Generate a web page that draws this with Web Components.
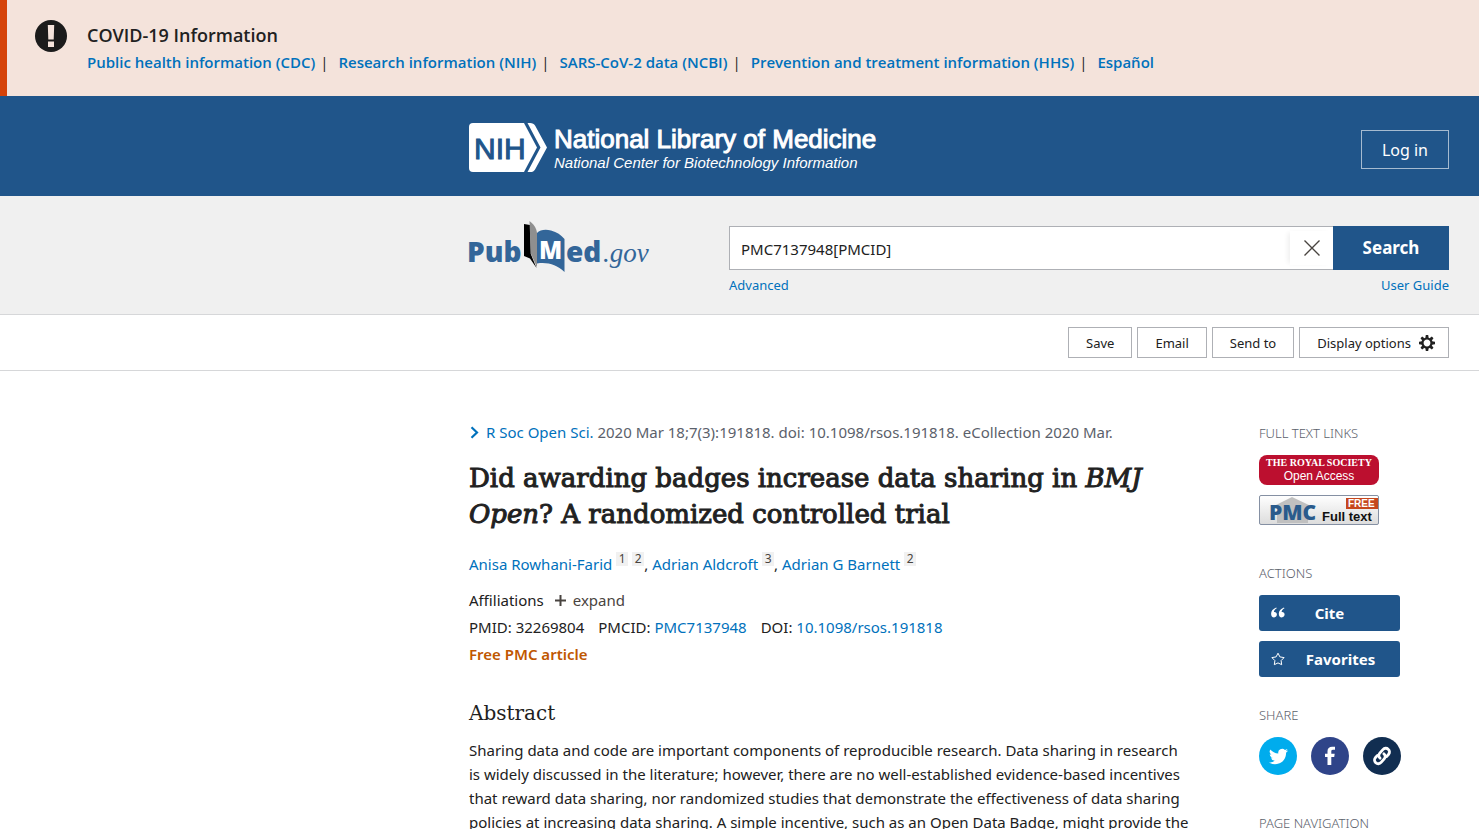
<!DOCTYPE html>
<html lang="en">
<head>
<meta charset="utf-8">
<meta name="viewport" content="width=device-width, initial-scale=1">
<title>Did awarding badges increase data sharing in BMJ Open? - PubMed</title>
<style>
  :root {
    --link: #0071bc;
    --ink: #212121;
    --muted: #5b616b;
    --brand: #20558a;
    --line: #d6d7d9;
    --control: #aeb0b5;
    --serif: "DejaVu Serif", serif;
    --page-pad: 30px;
    --content: 980px;
  }
  html { scrollbar-width: none; }
  body {
    margin: 0;
    background: #fff;
    color: var(--ink);
    font: 15px/24px "Noto Sans", "Open Sans", sans-serif;
  }
  .columns {
    display: grid;
    grid-template-columns: minmax(0, 720px) minmax(141px, 190px);
    column-gap: 70px;
    padding-top: 49px;
  }
</style>
</head>
<body>
<covid-banner>
  <banner-link href="#cdc">Public health information (CDC)</banner-link>
  <banner-link href="#nih">Research information (NIH)</banner-link>
  <banner-link href="#ncbi">SARS-CoV-2 data (NCBI)</banner-link>
  <banner-link href="#hhs">Prevention and treatment information (HHS)</banner-link>
  <banner-link href="#es" last>Español</banner-link>
</covid-banner>
<page-band tone="brand"><nlm-header></nlm-header></page-band>
<page-band tone="grey"><search-area></search-area></page-band>
<page-band tone="bar">
  <tool-bar>
    <tool-button>Save</tool-button>
    <tool-button>Email</tool-button>
    <tool-button>Send to</tool-button>
    <tool-button icon="gear">Display options</tool-button>
  </tool-bar>
</page-band>
<page-band>
  <div class="columns">
    <article-view></article-view>
    <side-panel></side-panel>
  </div>
</page-band>

<script>
const base = `
  * { box-sizing: border-box; }
  :host { display: block; }
  a { color: var(--link); text-decoration: none; }
  a:hover { text-decoration: underline; }
  button, input { font: inherit; color: inherit; margin: 0; border-radius: 0; }
  button { cursor: pointer; }
  svg { display: block; flex: none; }
  ul, p, h1, h2, h3 { margin: 0; padding: 0; }
`;

function define(name, css, html) {
  customElements.define(name, class extends HTMLElement {
    constructor() {
      super();
      const markup = typeof html === 'function' ? html(this) : html;
      this.attachShadow({ mode: 'open' }).innerHTML = `<style>${base}${css}</style>${markup}`;
    }
  });
}

define('banner-link', `
  :host { display: flex; line-height: 24px; }
  a { font-weight: 600; }
  span { margin: 0 10px 0 5px; }
`, el => `<a href="${el.getAttribute('href')}"><slot></slot></a>${el.hasAttribute('last') ? '' : '<span>|</span>'}`);

define('covid-banner', `
  :host { display: flex; gap: 20px; padding: 20px 28px 22px; background: #f4e3db; border-left: 7px solid #d54309; font-family: "Open Sans", sans-serif; }
  h2 { font-size: 18px; font-weight: 600; line-height: 30px; }
  nav { display: flex; flex-wrap: wrap; }
`, `
  <svg width="32" height="32" viewBox="0 0 32 32" aria-hidden="true">
    <circle cx="16" cy="16" r="16" fill="#1b1b1b"/>
    <path d="M12.8 5h6.400l-.5 14.600h-5.400zM13 21.400h6v5.600h-6z" fill="#f4e3db"/>
  </svg>
  <div>
    <h2>COVID-19 Information</h2>
    <nav aria-label="COVID-19 links"><slot></slot></nav>
  </div>
`);

define('page-band', `
  :host { display: grid; grid-template-columns: 1fr minmax(0, var(--content)); padding: 0 var(--page-pad); }
  :host([tone="brand"]) { background: var(--brand); color: #fff; }
  :host([tone="grey"]) { background: #f0f0f0; border-bottom: 1px solid var(--line); }
  :host([tone="bar"]) { border-bottom: 1px solid var(--line); }
  div { grid-column: 2; }
`, `<div><slot></slot></div>`);

define('nlm-header', `
  :host { display: flex; align-items: center; justify-content: space-between; min-height: 97px; padding-top: 3px; font-family: "Liberation Sans", Arial, sans-serif; }
  .logo { display: flex; gap: 7px; color: #fff; text-decoration: none; }
  .logo span { display: block; white-space: nowrap; }
  .big { font-size: 26px; line-height: 30px; padding-top: 1px; -webkit-text-stroke: 1px currentColor; }
  .small { font-size: 15px; font-style: italic; line-height: 17px; }
  button { height: 39px; margin-top: 4px; padding: 0 20px; border: 1px solid #a6bbd0; background: none; color: #fff; font: 16px/24px "Noto Sans", sans-serif; }
`, `
  <a class="logo" href="#ncbi-home">
    <svg width="78" height="49" viewBox="0 0 78 49" aria-hidden="true">
      <path d="M4 0h51l13 24.500L55 49H4a4 4 0 0 1-4-4V4a4 4 0 0 1 4-4z" fill="#fff"/>
      <path d="M58.500 0H61c2.600 0 4 .8 5.200 2.800L78 24.500 66.200 46.200C65 48.200 63.600 49 61 49h-2.500l13-24.500z" fill="#fff"/>
      <text x="5" y="36" font-family="Liberation Sans, Arial, sans-serif" font-size="30" fill="#20558a" stroke="#20558a" stroke-width="1">NIH</text>
    </svg>
    <span><span class="big">National Library of Medicine</span><span class="small">National Center for Biotechnology Information</span></span>
  </a>
  <button type="button">Log in</button>
`);

define('pubmed-logo', ``, `
  <a href="#pubmed" aria-label="PubMed home">
  <svg width="184" height="54" viewBox="-2 0 184 54">
    <path d="M55 4l6 1 .8 29 5.700 14-6.500-9.500L55 36z" fill="#000"/>
    <path d="M60.500 1c4 3 7 7 7.500 12v34.500l-6.200-14z" fill="#8f8f8f"/>
    <path d="M68 13c3-3 8-4 14-2.500 6 1.500 10 4.500 13.500 8.500v33c-8-7-16-10-27.500-8.500z" fill="#336699"/>
    <g font-family="Open Sans, sans-serif" font-weight="800" fill="#336699">
      <text x="-2" y="42" font-size="28">Pub</text>
      <text x="70" y="39" font-size="24" fill="#fff">M</text>
      <text x="97" y="42" font-size="28">ed</text>
    </g>
    <text x="134" y="42" font-family="Liberation Serif, serif" font-style="italic" font-size="27" fill="#336699">.gov</text>
  </svg></a>
`);

define('search-area', `
  :host { display: grid; grid-template-columns: 260px minmax(0, 1fr); padding: 30px 0 19px; }
  pubmed-logo { margin: -6px 0 0 -2px; }
  form { display: flex; height: 44px; }
  .field { flex: 1; display: flex; min-width: 0; background: #fff; border: 1px solid var(--control); border-right: 0; }
  input { flex: 1; min-width: 0; border: 0; outline: 0; background: none; padding: 2px 11px 0; }
  .clear { display: grid; place-items: center; width: 43px; margin: 4px 0; padding: 0; border: 0; background: #fff; box-shadow: -4px 0 5px -2px #eee; }
  .go { width: 116px; border: 0; background: var(--brand); color: #fff; font-size: 17px; font-weight: 700; }
  .links { display: flex; justify-content: space-between; font-size: 13px; line-height: 20px; padding-top: 5px; }
`, `
  <pubmed-logo></pubmed-logo>
  <div>
    <form role="search" onsubmit="return false">
      <div class="field">
        <input type="text" aria-label="Search term" value="PMC7137948[PMCID]">
        <button class="clear" type="button" aria-label="Clear search">
          <svg width="16" height="16" viewBox="0 0 16 16"><path d="M.5.5l15 15M15.500.5L.5 15.500" stroke="#494440" stroke-width="1.400" fill="none"/></svg>
        </button>
      </div>
      <button class="go" type="submit">Search</button>
    </form>
    <div class="links"><a href="#advanced">Advanced</a><a href="#guide">User Guide</a></div>
  </div>
`);

define('tool-bar', `
  :host { display: flex; justify-content: flex-end; gap: 5px; padding: 12px 0; }
`, `<slot></slot>`);

define('tool-button', `
  button { display: flex; align-items: center; gap: 8px; height: 31px; padding: 0 17px; border: 1px solid var(--control); background: #fff; font-size: 13px; line-height: 20px; }
  :host([icon]) button { padding-right: 13px; }
`, el => `<button type="button"><slot></slot>${el.hasAttribute('icon') ? `
  <svg width="16" height="16" viewBox="-8 -8 16 16" aria-hidden="true" fill="#212121">
    <circle r="4.500" fill="none" stroke="#212121" stroke-width="2.200"/>
    <path d="M-1.200-8h2.400l.5 3.200h-3.400zM-1.200 8h2.400l.5-3.200h-3.400zM-8-1.200v2.400l3.200.5v-3.400zM8-1.200v2.400l-3.200.5v-3.400z"/>
    <path transform="rotate(45)" d="M-1.200-8h2.400l.5 3.200h-3.400zM-1.200 8h2.400l.5-3.200h-3.400zM-8-1.200v2.400l3.200.5v-3.400zM8-1.200v2.400l-3.200.5v-3.400z"/>
  </svg>` : ''}</button>`);

define('affil-ref', `
  :host { display: inline-block; vertical-align: top; margin-left: 4px; }
  a { display: block; width: 12px; background: #f1f1f1; color: #494440; font-size: 12px; line-height: 14px; text-align: center; }
`, el => `<a href="#affiliation-${el.textContent}"><slot></slot></a>`);

define('article-view', `
  .cite { display: flex; align-items: center; color: var(--muted); }
  .cite svg { margin: 0 7px 0 1px; }
  h1 { margin-top: 16px; font: 400 26px/36px var(--serif); -webkit-text-stroke: 1px currentColor; }
  .authors { margin-top: 20px; }
  .facts { margin-top: 11px; line-height: 27px; }
  .row { display: flex; gap: 14px; }
  .aff { gap: 11px; }
  .aff button { display: flex; align-items: center; gap: 7px; border: 0; padding: 0; background: none; color: #494440; line-height: 27px; }
  .free { color: #bf5700; font-weight: 600; }
  h2 { margin-top: 30px; font: 400 20px/30px var(--serif); }
  .abstract { margin-top: 10px; }
`, `
  <div class="cite">
    <svg width="9" height="13" viewBox="0 0 9 13" aria-hidden="true"><path d="M1.500 1.200l5.500 5.300-5.500 5.300" fill="none" stroke="#0071bc" stroke-width="2.200"/></svg>
    <p><a href="#journal">R Soc Open Sci.</a> 2020 Mar 18;7(3):191818. doi: 10.1098/rsos.191818. eCollection 2020 Mar.</p>
  </div>
  <h1>Did awarding badges increase data sharing in <i>BMJ</i> <i>Open</i>? A randomized controlled trial</h1>
  <p class="authors"><a href="#rowhani">Anisa Rowhani-Farid</a><affil-ref>1</affil-ref><affil-ref>2</affil-ref>, <a href="#aldcroft">Adrian Aldcroft</a><affil-ref>3</affil-ref>, <a href="#barnett">Adrian G Barnett</a><affil-ref>2</affil-ref></p>
  <div class="facts">
    <div class="row aff">Affiliations
      <button type="button"><svg width="11" height="11" viewBox="0 0 11 11" aria-hidden="true"><path d="M5.500 0v11M0 5.500h11" stroke="#494440" stroke-width="2"/></svg>expand</button>
    </div>
    <div class="row"><span>PMID: 32269804</span><span>PMCID: <a href="#pmc">PMC7137948</a></span><span>DOI: <a href="#doi">10.1098/rsos.191818</a></span></div>
    <p class="free">Free PMC article</p>
  </div>
  <h2>Abstract</h2>
  <p class="abstract">Sharing data and code are important components of reproducible research. Data sharing in research is widely discussed in the literature; however, there are no well-established evidence-based incentives that reward data sharing, nor randomized studies that demonstrate the effectiveness of data sharing policies at increasing data sharing. A simple incentive, such as an Open Data Badge, might provide the</p>
`);

define('side-section', `
  :host { margin-bottom: 38px; }
  :host([tight]) { margin-bottom: 28px; }
  h3 { margin-bottom: 12px; color: var(--muted); font-size: 13px; font-weight: 300; line-height: 20px; text-transform: uppercase; }
`, el => `<h3>${el.getAttribute('heading')}</h3><slot></slot>`);

define('royal-badge', `
  a { display: block; width: 120px; height: 30px; padding-top: 2px; border-radius: 8px; background: #bc0f2f; color: #fff; text-align: center; white-space: nowrap; }
  span { display: block; font: 12px/14px "Liberation Sans", Arial, sans-serif; }
  .name { font: bold 10px/12px "Liberation Serif", serif; }
`, `<a href="#royal-society"><span class="name">THE ROYAL SOCIETY</span><span>Open Access</span></a>`);

define('pmc-badge', `
  :host { margin-top: 10px; }
  a { display: block; width: 120px; height: 30px; }
`, `
  <a href="#pmc-full-text">
  <svg width="120" height="30" viewBox="0 0 120 30">
    <defs><linearGradient id="g" x2="0" y2="1"><stop stop-color="#fff"/><stop offset="1" stop-color="#dcdcdc"/></linearGradient></defs>
    <rect x=".5" y=".5" width="119" height="29" rx="1.500" fill="url(#g)" stroke="#8590a3"/>
    <path d="M33 2L14 11.500h4V28h31V11.500h4z" fill="#c0c0c0"/>
    <path d="M87 3h32v11H87z" fill="#c6471d"/>
    <text x="10" y="25" font-family="Open Sans, sans-serif" font-weight="800" font-size="21" fill="#2a5b8c">PMC</text>
    <g font-family="Liberation Sans, Arial, sans-serif" font-weight="700">
      <text x="89" y="12" font-size="10" fill="#fff">FREE</text>
      <text x="63" y="26" font-size="13" fill="#111">Full text</text>
    </g>
  </svg></a>
`);

const glyphs = {
  quote: `<path d="M5.800 2.200C3.900 3.200 3 4.500 2.900 6.100c1.700-.3 3 .8 3 2.500 0 1.600-1.200 2.800-2.800 2.800C1.200 11.400.1 9.900.1 7.700.1 4.900 2 2.700 5.200 1.400zM13.500 2.200c-1.900 1-2.800 2.300-2.900 3.900 1.700-.3 3 .8 3 2.500 0 1.600-1.200 2.800-2.800 2.800-1.900 0-3-1.500-3-3.700 0-2.800 1.900-5 5.100-6.300z" fill="#fff"/>`,
  star: `<path d="M7 1.200l1.900 3.700 4.200.7-3 3 .6 4.100L7 10.900l-3.700 1.800.6-4.100-3-3 4.200-.7z" fill="none" stroke="#fff" stroke-linejoin="round"/>`
};

define('action-button', `
  button { display: grid; grid-template-columns: 14px 1fr; column-gap: 8px; align-items: center; width: 141px; height: 36px; padding: 0 12px; border: 0; border-radius: 3px; background: var(--brand); color: #fff; font-weight: 700; }
  :host([icon="quote"]) button { grid-template-columns: 14px 1fr 14px; }
  :host(:not(:first-child)) { margin-top: 10px; }
`, el => `<button type="button"><svg width="14" height="14" viewBox="0 0 14 14" aria-hidden="true">${glyphs[el.getAttribute('icon')]}</svg><span><slot></slot></span></button>`);

define('share-links', `
  :host { display: flex; gap: 14px; }
  a { display: grid; place-items: center; width: 38px; height: 38px; border-radius: 50%; }
  .tw { background: #00aced; }
  .fb { background: #2f4489; }
  .ln { background: #112e51; }
`, `
  <a class="tw" href="#twitter" aria-label="Twitter"><svg width="19" height="19" viewBox="0 0 24 24" fill="#fff"><path d="M23.950 4.570a10 10 0 0 1-2.820.770 4.960 4.960 0 0 0 2.160-2.720c-.950.550-2 .950-3.130 1.180a4.920 4.920 0 0 0-8.380 4.480C7.690 8.090 4.070 6.130 1.640 3.160a4.920 4.920 0 0 0 1.520 6.570 4.900 4.900 0 0 1-2.230-.610v.060a4.920 4.920 0 0 0 3.950 4.830 5 5 0 0 1-2.210.080 4.940 4.940 0 0 0 4.600 3.420A9.870 9.870 0 0 1 0 19.540a14 14 0 0 0 7.550 2.210c9.050 0 14-7.500 14-13.980 0-.210 0-.420-.020-.630a9.940 9.940 0 0 0 2.460-2.550z"/></svg></a>
  <a class="fb" href="#facebook" aria-label="Facebook"><svg width="12" height="20" viewBox="0 0 12 20" fill="#fff"><path d="M11 .8v3H9c-1.500 0-1.700.7-1.700 1.700v2.200h3.400l-.5 3.200H7.300V19H3.500v-8.100H1V7.700h2.500V5.200C3.500 2.300 5.300.7 8.100.7c1.300 0 2.500 0 2.900.1z"/></svg></a>
  <a class="ln" href="#permalink" aria-label="Permalink"><svg width="20" height="20" viewBox="0 0 20 20" fill="none" stroke="#fff" stroke-width="2.800" stroke-linecap="round"><path d="M8.400 12.400c-1.700-1-2.100-3.200-1-4.900l2.600-4c1.200-1.800 3.500-2.300 5.200-1.100 1.800 1.200 2.200 3.400 1 5.200l-1.600 2.400" transform="rotate(8 10 10)"/><path d="M11.600 7.600c1.700 1 2.100 3.200 1 4.900l-2.600 4c-1.200 1.800-3.500 2.300-5.200 1.100-1.800-1.200-2.200-3.400-1-5.200l1.600-2.400" transform="rotate(8 10 10)"/></svg></a>
`);

define('side-panel', `
  :host { padding-top: 3px; }
`, `
  <side-section heading="Full text links"><royal-badge></royal-badge><pmc-badge></pmc-badge></side-section>
  <side-section heading="Actions" tight><action-button icon="quote">Cite</action-button><action-button icon="star">Favorites</action-button></side-section>
  <side-section heading="Share"><share-links></share-links></side-section>
  <side-section heading="Page navigation"></side-section>
`);
</script>
</body>
</html>
